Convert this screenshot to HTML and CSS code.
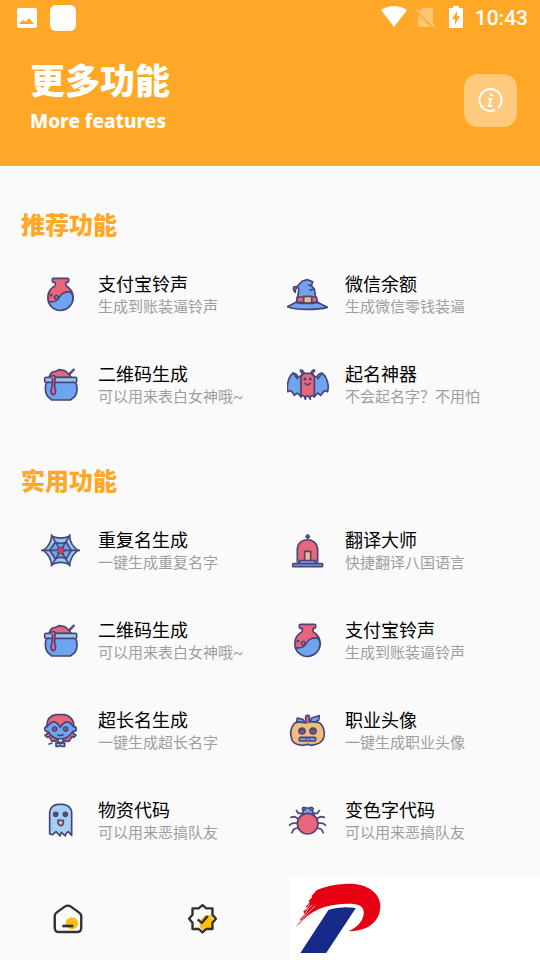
FILE: index.html
```
<!DOCTYPE html>
<html lang="zh-CN">
<head>
  <meta charset="UTF-8">
  <meta name="viewport" content="width=device-width, initial-scale=1.0">
  <title>更多功能</title>
  <link rel="stylesheet" href="styles.css">
</head>
<body>

<svg class="sprite" aria-hidden="true">
  <symbol id="potion" viewBox="30 24 126 126">
    <path class="red" d="M67 42Q67 40 70 40H113Q116 40 116 43V49Q116 52 112 52H108V59Q108 64 115 67A38 38 0 1 1 68 67Q76 64 76 59V52H70Q67 52 67 48Z"/>
    <path class="blue" d="M55 110C98 116 78 80 119 80Q130 88 129 102A38 38 0 0 1 55 110Z"/>
    <circle class="light" cx="79" cy="97" r="5"/>
    <circle class="dark" cx="63" cy="90" r="2"/><path class="dark" d="M56 97H58"/>
  </symbol>
  <symbol id="hat" viewBox="21 24 126 126">
    <path class="blue" d="M52 99Q57 82 56 69Q45 65 46 82Q38 74 41 66L52 64L67 48L83 44L98 50L94 62L103 72L106 92L109 110L142 127Q122 133 82 133Q42 133 22 125L51 110Z"/>
    <path class="red" d="M52 96H109L113 112H49Z"/>
    <rect class="tan" x="71" y="94" width="24" height="20"/>
    <path class="line" d="M94 62L84 60M103 72L88 76M49 112Q80 119 113 112"/>
  </symbol>
  <symbol id="pot" viewBox="18 24 126 126">
    <path class="blue" d="M38 80Q29 106 41 124L54 135H109L123 124Q134 106 125 80Z"/>
    <path class="red" d="M45 68Q49 49 65 49L75 44L92 47L104 57L113 68Z"/>
    <path class="line thick" d="M105 59L121 42"/>
    <rect class="light" x="32" y="67" width="96" height="15" rx="4"/>
    <path class="red" d="M48 68Q52 60 61 62Q66 65 62 79V94Q62 99 65 106Q65 119 58 119Q50 118 51 107L55 89V70"/>
  </symbol>
  <symbol id="bat" viewBox="21 24 126 126">
    <path class="blue" d="M64 62L54 66Q50 55 39 54Q24 66 22 95L23 110L32 107L38 113L43 121L52 114L63 125ZM101 62L111 66Q115 55 126 54Q142 66 145 95L143 110L134 107L128 114L122 121L113 114L103 125Z"/>
    <path class="line" d="M41 56L54 73M126 56L112 73"/>
    <path class="light" d="M67 58L61 46Q67 43 72 54ZM97 58L104 46Q98 43 93 54Z"/>
    <path class="red" d="M63 70Q62 58 75 55H90Q103 58 103 70V126L97 121L91 125V133L87 124H78L76 133L73 124L68 121L63 126Z"/>
    <circle class="dark" cx="75" cy="72" r="2"/><circle class="dark" cx="91" cy="72" r="2"/><path class="line" d="M74 83Q82 96 92 83"/>
  </symbol>
  <symbol id="web" viewBox="18 21 126 126">
    <path class="light" d="M53 42Q80 55 107 42Q108 69 132 85Q110 101 107 128Q80 114 53 128Q50 102 28 85Q50 70 53 42Z"/>
    <path class="blue" d="M64 61Q81 67 97 61L112 85L97 110Q80 102 64 110L47 85Z"/>
    <path class="line" d="M51 37L109 133M109 37L51 133M21 85H138"/>
    <rect class="berry" x="71" y="76" width="19" height="19" rx="4"/>
  </symbol>
  <symbol id="tomb" viewBox="21 21 126 126">
    <path class="thick" d="M83 37V51M76 44H90"/>
    <path class="red" d="M52 120V82Q53 60 74 54H91Q111 60 113 82V120Z"/>
    <path class="tan" d="M74 116V88H92V116"/>
    <rect class="light" x="59" y="116" width="47" height="9"/>
    <rect class="blue" x="38" y="125" width="90" height="9" rx="3"/>
  </symbol>
  <symbol id="vampire" viewBox="30 27 126 126">
    <path class="red" d="M57 96L45 106L52 112L57 110L66 124L82 122V108ZM126 96L138 106L131 112L126 110L117 124L100 122V108Z"/>
    <path class="white" d="M84 114H99V127H84Z"/>
    <path class="blue" d="M51 80Q42 80 45 92L55 96Q67 117 91 117Q115 117 128 95L138 92Q142 80 131 80L126 64H58Z"/>
    <path class="red" d="M50 79Q51 48 78 44H104Q132 51 132 80L119 68Q105 60 91 82Q78 61 65 67Z"/>
    <circle class="tan" cx="74" cy="87" r="6"/><circle class="tan" cx="107" cy="87" r="6"/>
    <circle class="dark" cx="74" cy="87" r="1"/><circle class="dark" cx="107" cy="87" r="1"/>
    <path class="line" d="M82 104L90 107L101 104M55 133L67 129"/>
    <path class="light" d="M78 139V128L90 130L104 128V139H94L90 136L86 139Z"/>
  </symbol>
  <symbol id="pumpkin" viewBox="21 27 126 126">
    <path class="blue" d="M69 69L50 65L52 54L68 58L76 69ZM89 68L95 54L118 47L116 61L106 66Z"/>
    <path class="tan" d="M44 69Q58 64 78 69L88 66Q103 64 120 69Q136 85 132 110Q128 127 111 132L95 136L83 133L67 136Q44 134 36 121Q25 90 44 69Z"/>
    <path class="red" d="M77 68V49Q80 44 88 47V68"/>
    <circle class="red" cx="66" cy="93" r="9"/><circle class="red" cx="99" cy="93" r="9"/>
    <path class="line" d="M58 93Q66 85 74 93M91 93Q99 85 107 93M66 93V98M99 93V98"/>
    <rect class="blue" x="58" y="112" width="49" height="11" rx="4"/><path class="line" d="M76 117H80M86 117H90"/>
  </symbol>
  <symbol id="ghost" viewBox="30 297 126 126">
    <path class="pale" d="M59 336Q62 315 84 313H99Q123 316 125 337V406L115 395L108 401L106 408L94 397L90 408L78 395L68 404L59 402Z"/>
    <circle class="eye" cx="77" cy="343" r="6"/><circle class="eye" cx="106" cy="343" r="6"/>
    <path class="tan" d="M84 361H100V370Q99 376 92 377Q85 374 84 369Z"/>
  </symbol>
  <symbol id="spider" viewBox="21 297 126 126">
    <path class="line" d="M66 340L55 340L48 330M100 340L112 340L119 330M56 357L44 350L31 352M109 357L121 350L135 352M53 369L36 370L27 377M112 369L129 370L138 377M54 383L41 388L35 400M110 383L124 388L131 400"/>
    <path class="blue" d="M66 344L70 333L67 326L75 324H91L99 326L97 333L103 344Z"/>
    <circle class="red" cx="83" cy="371" r="31"/>
    <circle class="tan" cx="72" cy="326" r="4"/><circle class="tan" cx="94" cy="326" r="4"/>
  </symbol>
</svg>

<header class="header">
  <div class="status">
    <svg class="status-left" width="60" height="28" viewBox="0 0 60 28">
      <path fill="#fff" fill-rule="evenodd" d="M3 8H19Q21 8 21 10V26Q21 28 19 28H3Q1 28 1 26V10Q1 8 3 8ZM3 24H18L13 18L10 22L7 20Z"/>
      <rect fill="#fff" x="34" y="5" width="26" height="26" rx="6"/>
    </svg>
    <svg class="status-right" width="84" height="28" viewBox="0 0 84 28">
      <path fill="#fff" d="M0 10Q13 2 26 10L13 27Z"/>
      <g opacity=".35"><path fill="#fff" d="M41 8H52V26L38 12ZM37 14L50 27H39Q37 27 37 25Z"/><path stroke="#fff" stroke-width="2" d="M35 9L54 27"/></g>
      <path fill="#fff" fill-rule="evenodd" d="M68 8H72V6H78V8H82V28H68ZM76 11L71 19H74V25L79 16H76Z"/>
    </svg>
    <span class="clock">10:43</span>
  </div>
  <div class="header-row">
    <div>
      <h1>更多功能</h1>
      <p class="header-sub">More features</p>
    </div>
    <button class="info" type="button" aria-label="关于">
      <svg width="26" height="26" viewBox="1 0 26 26" fill="none" stroke="#fff" stroke-width="2">
        <path d="M18 22A11 11 0 1 1 21 20"/>
        <path d="M11 11H14L12 18H15M13 7H16"/>
      </svg>
    </button>
  </div>
</header>

<main>
  <section>
    <h2>推荐功能</h2>
    <div class="list">
      <a class="item" href="#"><svg class="icon"><use href="#potion"/></svg><span class="text"><b>支付宝铃声</b><small>生成到账装逼铃声</small></span></a>
      <a class="item" href="#"><svg class="icon"><use href="#hat"/></svg><span class="text"><b>微信余额</b><small>生成微信零钱装逼</small></span></a>
      <a class="item" href="#"><svg class="icon"><use href="#pot"/></svg><span class="text"><b>二维码生成</b><small>可以用来表白女神哦~</small></span></a>
      <a class="item" href="#"><svg class="icon"><use href="#bat"/></svg><span class="text"><b>起名神器</b><small>不会起名字？不用怕</small></span></a>
    </div>
  </section>

  <section>
    <h2>实用功能</h2>
    <div class="list">
      <a class="item" href="#"><svg class="icon"><use href="#web"/></svg><span class="text"><b>重复名生成</b><small>一键生成重复名字</small></span></a>
      <a class="item" href="#"><svg class="icon"><use href="#tomb"/></svg><span class="text"><b>翻译大师</b><small>快捷翻译八国语言</small></span></a>
      <a class="item" href="#"><svg class="icon"><use href="#pot"/></svg><span class="text"><b>二维码生成</b><small>可以用来表白女神哦~</small></span></a>
      <a class="item" href="#"><svg class="icon"><use href="#potion"/></svg><span class="text"><b>支付宝铃声</b><small>生成到账装逼铃声</small></span></a>
      <a class="item" href="#"><svg class="icon"><use href="#vampire"/></svg><span class="text"><b>超长名生成</b><small>一键生成超长名字</small></span></a>
      <a class="item" href="#"><svg class="icon"><use href="#pumpkin"/></svg><span class="text"><b>职业头像</b><small>一键生成职业头像</small></span></a>
      <a class="item" href="#"><svg class="icon"><use href="#ghost"/></svg><span class="text"><b>物资代码</b><small>可以用来恶搞队友</small></span></a>
      <a class="item" href="#"><svg class="icon"><use href="#spider"/></svg><span class="text"><b>变色字代码</b><small>可以用来恶搞队友</small></span></a>
    </div>
  </section>
</main>

<nav class="tabs">
  <a class="tab" href="#" aria-label="首页">
    <svg width="32" height="32" viewBox="150 127 93 96" preserveAspectRatio="none" fill="none" stroke="#33332d" stroke-width="7" stroke-linejoin="round">
      <circle cx="208" cy="188" r="18" fill="#ffbf0f" stroke="none"/>
      <path d="M158 166Q158 160 163 156L187 138Q196 132 205 138L229 156Q235 160 235 166V201Q235 214 222 214H171Q158 214 158 201Z"/>
      <path stroke-width="8" d="M180 196H212"/>
    </svg>
  </a>
  <a class="tab" href="#" aria-label="功能">
    <svg width="32" height="32" viewBox="543 128 93 96" preserveAspectRatio="none" fill="none" stroke="#33332d" stroke-width="7" stroke-linejoin="round">
      <path fill="#ffbf0f" stroke="none" d="M595 165H616L618 178L626 181L617 190V205L601 205L588 210L580 201V181Z"/>
      <path d="M588 134L599 144H617V163L627 175L617 187V206H599L588 216L577 206H559V187L549 175L559 163V144H577Z"/>
      <path d="M574 177L586 188L603 167"/>
    </svg>
  </a>
  <div class="banner">
    <svg width="100" height="83" viewBox="843 51 290 249" preserveAspectRatio="none">
      <path fill="#e60012" d="M859 205L864 193L876 182L871 181L884 163L882 154L893 143L888 141L900 127L897 123L907 112L906 107L921 90Q955 74 1008 71C1071 69 1104 102 1105 136C1105 182 1074 213 1013 214C1044 199 1057 179 1057 157C1057 135 1036 130 1008 131C946 132 901 151 868 194L867 189Z"/>
      <path stroke="#fff" stroke-width="2" fill="none" d="M881 170L895 147L908 134M868 190L891 163L916 137M888 151L899 132"/>
      <path fill="#172a88" d="M955 149Q990 137 1034 144L948 279H873Z"/>
    </svg>
  </div>
</nav>

</body>
</html>
```
FILE: styles.css
```
* {
  box-sizing: border-box;
}
body {
  margin: 0;
  background: #fafafa;
  color: #000;
  font-family: Roboto, 'Noto Sans CJK SC', sans-serif;
}
h1, h2, p {
  margin: 0;
}
a {
  color: inherit;
  text-decoration: none;
}
.sprite {
  display: block;
  width: 0;
  height: 0;
}
.header {
  background: #ffa726;
  color: #fff;
  padding-bottom: 8px;
}
.status {
  display: flex;
  align-items: center;
  height: 36px;
  padding: 0 12px 0 16px;
}
.status svg {
  overflow: visible;
  margin-bottom: 8px;
}
.status-right {
  margin-left: auto;
}
.clock {
  margin-left: 10px;
  font-size: 21px;
  font-weight: 500;
}
.header-row {
  display: flex;
  justify-content: space-between;
  align-items: center;
  height: 122px;
  padding: 0 23px 0 30px;
}
h1 {
  font-family: 'Noto Sans CJK SC', sans-serif;
  font-size: 35px;
  line-height: 48px;
  font-weight: 900;
}
.header-sub {
  font-family: 'Noto Sans', sans-serif;
  font-size: 19px;
  line-height: 36px;
  font-weight: 800;
}
.info {
  display: flex;
  align-items: center;
  justify-content: center;
  width: 53px;
  height: 53px;
  margin-top: 7px;
  padding: 0;
  border: 0;
  border-radius: 14px;
  background: #ffca7d;
}
section {
  padding-top: 38px;
}
section:first-child {
  padding-top: 45px;
}
h2 {
  padding-left: 21px;
  font-family: 'Noto Sans CJK SC', sans-serif;
  font-size: 24px;
  line-height: 26px;
  font-weight: 900;
  color: #ffa726;
}
.list {
  display: grid;
  grid-template-columns: 1fr 1fr;
  margin-top: 12px;
  padding: 0 6px 0 40px;
}
.item {
  display: flex;
  align-items: center;
  gap: 16px;
  height: 90px;
}
.icon {
  width: 42px;
  height: 42px;
  stroke: #4b4577;
  stroke-width: 5;
  stroke-linejoin: round;
}
.text {
  display: flex;
  flex-direction: column;
  padding-top: 2px;
}
.text b {
  font-size: 18px;
  line-height: 24px;
  font-weight: 400;
}
.text small {
  font-size: 15px;
  line-height: 20px;
  color: #9e9e9e;
}
.red {
  fill: #e9657b;
}
.blue {
  fill: #6ea5ee;
}
.light {
  fill: #94c7f2;
}
.pale {
  fill: #a5d0f5;
}
.tan {
  fill: #f0bd7e;
}
.white {
  fill: #fff;
}
.dark {
  fill: #4b4577;
}
.berry {
  fill: #c84267;
  stroke-dasharray: 3 3;
}
.eye {
  fill: #94365f;
}
.line {
  fill: none;
}
.thick {
  stroke-width: 7;
}
.tabs {
  position: relative;
  display: grid;
  grid-template-columns: repeat(4, 1fr);
  height: 83px;
  margin-top: 12px;
}
.tab {
  display: flex;
  align-items: center;
  justify-content: center;
}
.banner {
  position: absolute;
  top: 0;
  right: 0;
  bottom: 0;
  width: 250px;
  background: #fff;
}
```
